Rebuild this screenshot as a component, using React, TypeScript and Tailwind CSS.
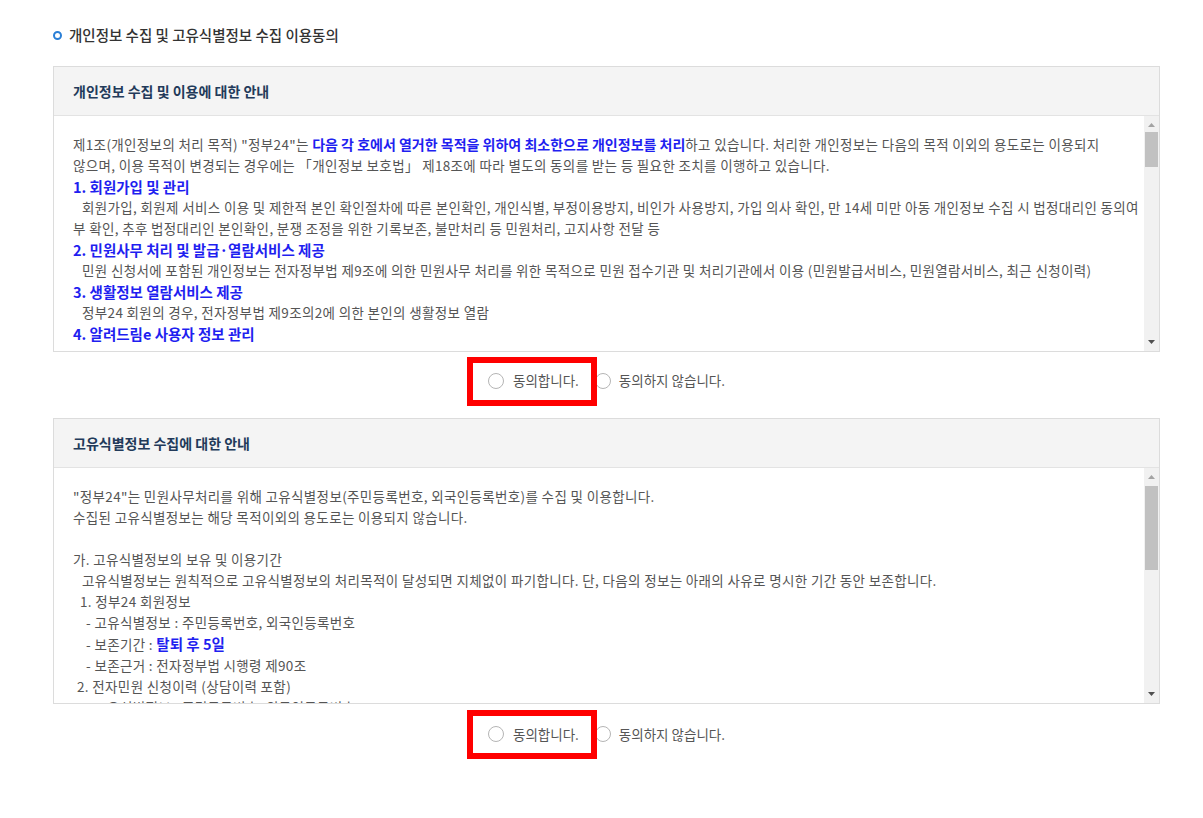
import React from "react";

const font = { fontFamily: '"Noto Sans CJK KR", "Noto Sans", sans-serif' };

function Scrollbar({ thumbTop, thumbHeight }: { thumbTop: number; thumbHeight: number }) {
  return (
    <div className="relative w-[15px] shrink-0 bg-[#f1f1f1]">
      <svg className="absolute left-[4px] top-[7px]" width="7" height="4" viewBox="0 0 7 4">
        <path d="M0 4 L3.5 0 L7 4 Z" fill="#a3a3a3" />
      </svg>
      <div
        className="absolute left-[1px] right-[1px] bg-[#c1c1c1]"
        style={{ top: thumbTop, height: thumbHeight }}
      />
      <svg className="absolute left-[4px] bottom-[7px]" width="7" height="4" viewBox="0 0 7 4">
        <path d="M0 0 L7 0 L3.5 4 Z" fill="#505050" />
      </svg>
    </div>
  );
}

function Radios({ bottomPad }: { bottomPad: string }) {
  return (
    <div className={`flex h-[66px] items-center justify-center text-[13.5px] text-[#555] ${bottomPad}`}>
      <label className="relative flex h-[20px] items-center gap-[9px]">
        <span className="h-[16px] w-[16px] rounded-full border border-[#b5b5b5] bg-white" />
        <span>동의합니다.</span>
        <span className="pointer-events-none absolute -top-[14px] -bottom-[15px] -left-[21px] -right-[18px] border-[6px] border-[#ff0000]" />
      </label>
      <label className="ml-[16px] flex h-[20px] items-center gap-[8px]">
        <span className="h-[16px] w-[16px] rounded-full border border-[#b5b5b5] bg-white" />
        <span>동의하지 않습니다.</span>
      </label>
    </div>
  );
}

function Box({
  title,
  thumbTop,
  thumbHeight,
  children,
}: {
  title: string;
  thumbTop: number;
  thumbHeight: number;
  children: React.ReactNode;
}) {
  return (
    <div className="border border-[#dcdcdc]">
      <div className="flex h-[49px] items-center border-b border-[#e3e3e3] bg-[#f4f4f4] px-[19px] text-[14px] font-bold text-[#223a5a]">
        {title}
      </div>
      <div className="flex h-[235px] bg-white">
        <div className="flex-1 overflow-hidden pl-[19px] pt-[18px] text-[13.5px] leading-[21px] tracking-[0.35px] text-[#555] whitespace-nowrap">
          {children}
        </div>
        <Scrollbar thumbTop={thumbTop} thumbHeight={thumbHeight} />
      </div>
    </div>
  );
}

const H = ({ children }: { children: React.ReactNode }) => (
  <div className="text-[14.5px] font-bold tracking-normal text-[#1f1ff0]">{children}</div>
);

export default function App() {
  return (
    <div className="min-h-[818px] bg-white" style={font}>
      <div className="ml-[53px] w-[1107px] pt-[25px]">
        <div className="flex h-[20px] items-center gap-[7px] text-[14.5px] font-medium text-[#333]">
          <span className="h-[9px] w-[9px] rounded-full border-[2.5px] border-[#2a7fd6]" />
          <span>개인정보 수집 및 고유식별정보 수집 이용동의</span>
        </div>

        <div className="mt-[21px]">
          <Box title="개인정보 수집 및 이용에 대한 안내" thumbTop={16} thumbHeight={35}>
            <div>
              제1조(개인정보의 처리 목적) "정부24"는{" "}
              <b className="text-[14px] tracking-normal text-[#1f1ff0]">다음 각 호에서 열거한 목적을 위하여 최소한으로 개인정보를 처리</b>하고 있습니다. 처리한 개인정보는 다음의 목적 이외의 용도로는 이용되지
            </div>
            <div>
              않으며, 이용 목적이 변경되는 경우에는 「개인정보 보호법」 제18조에 따라 별도의 동의를 받는 등 필요한 조치를 이행하고 있습니다.
            </div>
            <H>1. 회원가입 및 관리</H>
            <div className="pl-[9px]">
              회원가입, 회원제 서비스 이용 및 제한적 본인 확인절차에 따른 본인확인, 개인식별, 부정이용방지, 비인가 사용방지, 가입 의사 확인, 만 14세 미만 아동 개인정보 수집 시 법정대리인 동의여
            </div>
            <div>부 확인, 추후 법정대리인 본인확인, 분쟁 조정을 위한 기록보존, 불만처리 등 민원처리, 고지사항 전달 등</div>
            <H>2. 민원사무 처리 및 발급·열람서비스 제공</H>
            <div className="pl-[9px]">
              민원 신청서에 포함된 개인정보는 전자정부법 제9조에 의한 민원사무 처리를 위한 목적으로 민원 접수기관 및 처리기관에서 이용 (민원발급서비스, 민원열람서비스, 최근 신청이력)
            </div>
            <H>3. 생활정보 열람서비스 제공</H>
            <div className="pl-[9px]">정부24 회원의 경우, 전자정부법 제9조의2에 의한 본인의 생활정보 열람</div>
            <H>4. 알려드림e 사용자 정보 관리</H>
          </Box>
        </div>

        <Radios bottomPad="pb-[9px]" />

        <Box title="고유식별정보 수집에 대한 안내" thumbTop={18} thumbHeight={84}>
          <div>"정부24"는 민원사무처리를 위해 고유식별정보(주민등록번호, 외국인등록번호)를 수집 및 이용합니다.</div>
          <div>수집된 고유식별정보는 해당 목적이외의 용도로는 이용되지 않습니다.</div>
          <div className="h-[21px]" />
          <div>가. 고유식별정보의 보유 및 이용기간</div>
          <div className="pl-[9px]">
            고유식별정보는 원칙적으로 고유식별정보의 처리목적이 달성되면 지체없이 파기합니다. 단, 다음의 정보는 아래의 사유로 명시한 기간 동안 보존합니다.
          </div>
          <div className="pl-[7px]">1. 정부24 회원정보</div>
          <div className="pl-[13px]">- 고유식별정보 : 주민등록번호, 외국인등록번호</div>
          <div className="pl-[13px]">
            - 보존기간 : <b className="text-[14.5px] tracking-normal text-[#1f1ff0]">탈퇴 후 5일</b>
          </div>
          <div className="pl-[13px]">- 보존근거 : 전자정부법 시행령 제90조</div>
          <div className="pl-[4px]">2. 전자민원 신청이력 (상담이력 포함)</div>
          <div className="pl-[13px]">- 고유식별정보 : 주민등록번호, 외국인등록번호</div>
        </Box>

        <Radios bottomPad="pb-[6px]" />
      </div>
    </div>
  );
}
